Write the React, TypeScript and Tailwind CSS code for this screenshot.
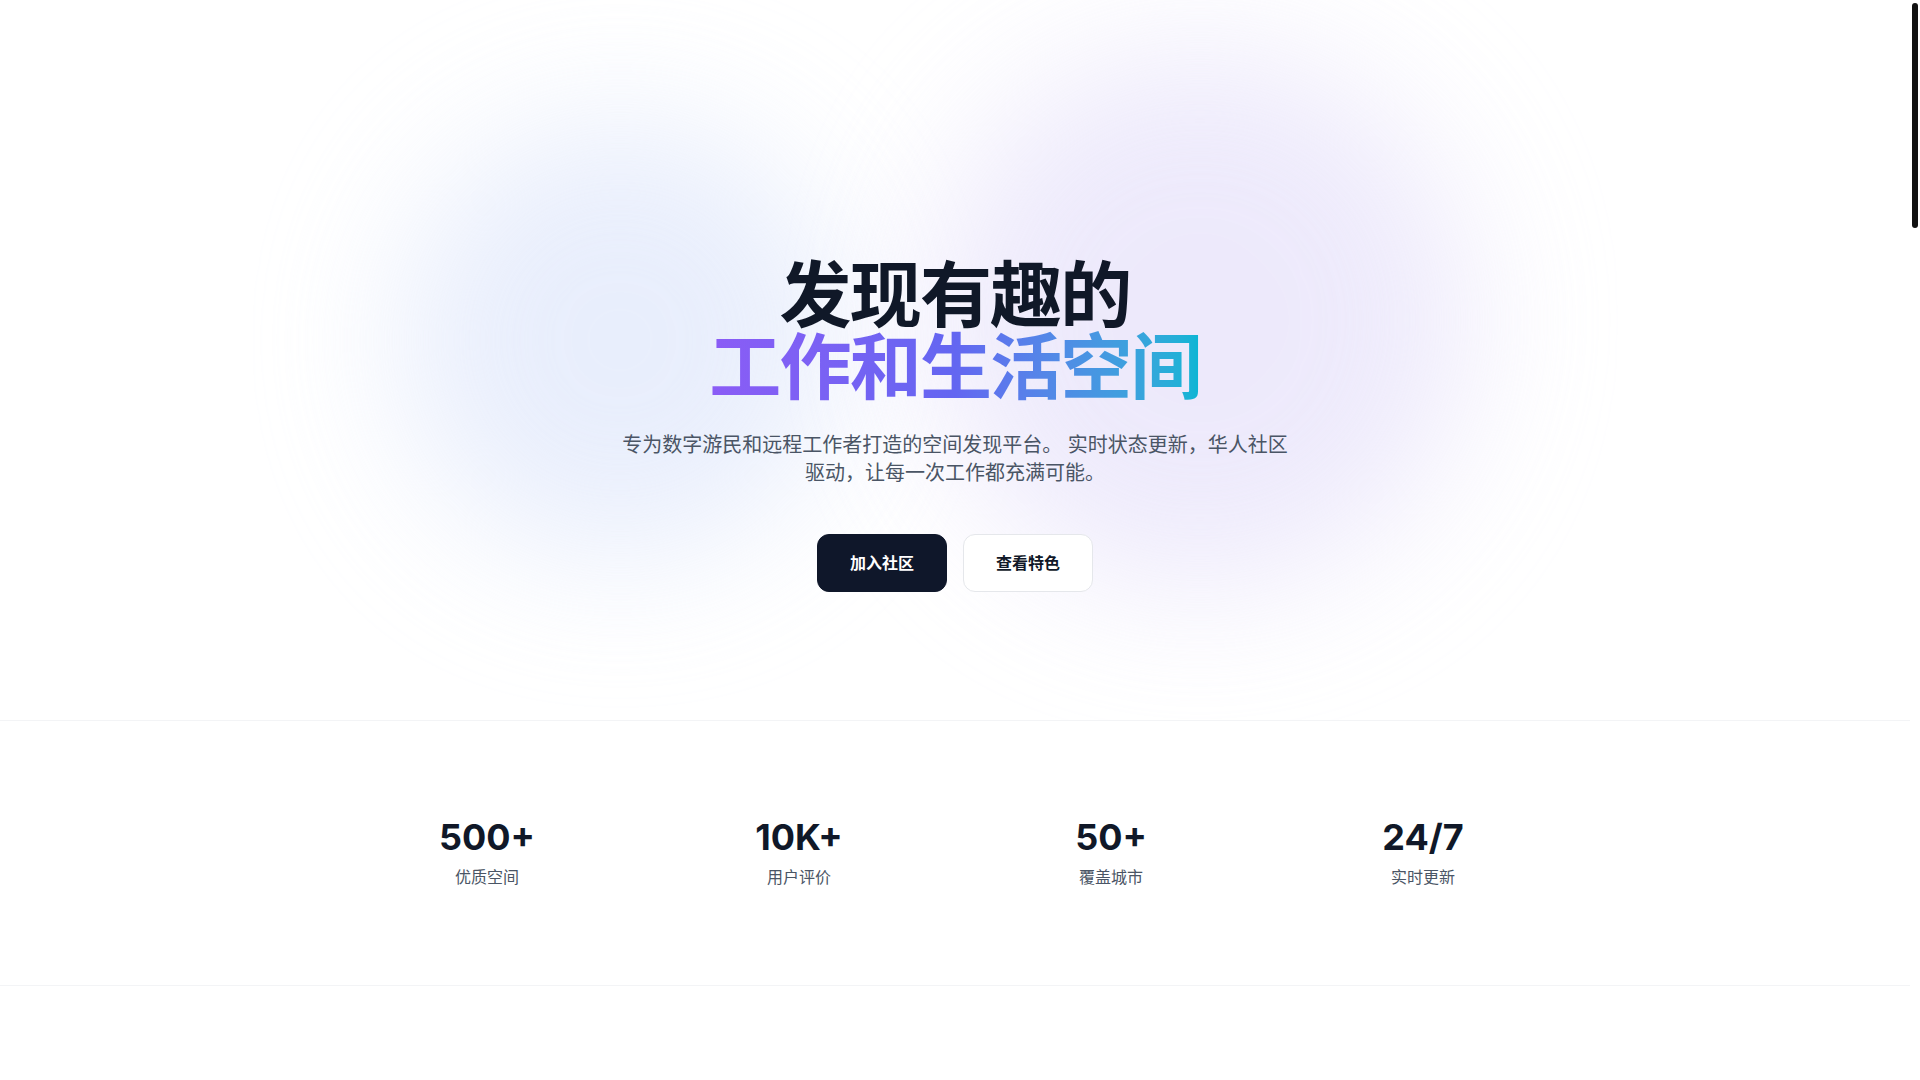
import React from "react";

const stats = [
  { value: "500+", label: "优质空间" },
  { value: "10K+", label: "用户评价" },
  { value: "50+", label: "覆盖城市" },
  { value: "24/7", label: "实时更新" },
];

export default function App() {
  return (
    <div
      className="flex h-screen overflow-hidden bg-white text-gray-900"
      style={{ fontFamily: "Inter, 'Noto Sans CJK SC', 'Noto Sans', sans-serif" }}
    >
      <main className="min-w-0 flex-1">
        {/* Hero */}
        <section className="relative h-[720px] overflow-hidden bg-white">
          <div className="pointer-events-none absolute left-[400px] top-[120px] h-[440px] w-[440px] rounded-full bg-[#dfe7fb] opacity-70 blur-[70px]" />
          <div className="pointer-events-none absolute left-[930px] top-[50px] h-[540px] w-[540px] rounded-full bg-[#e6e1fa] opacity-70 blur-[70px]" />
          <div className="relative flex flex-col items-center pt-[259px] text-center">
            <h1 className="text-7xl font-bold leading-none tracking-tight">
              <span className="block text-gray-900">发现有趣的</span>
              <span className="block">
                <span className="bg-gradient-to-r from-[#8b5cf6] via-[#6366f1] to-[#06b6d4] bg-clip-text text-transparent">
                  工作和生活空间
                </span>
              </span>
            </h1>
            <p className="mt-7 max-w-2xl text-xl text-gray-600">
              专为数字游民和远程工作者打造的空间发现平台。 实时状态更新，华人社区驱动，让每一次工作都充满可能。
            </p>
            <div className="mt-[47px] flex gap-4">
              <button className="rounded-xl border border-[#0f172a] bg-[#0f172a] px-8 py-4 text-base font-semibold text-white">
                加入社区
              </button>
              <button className="rounded-xl border border-gray-200 bg-white px-8 py-4 text-base font-semibold text-gray-900">
                查看特色
              </button>
            </div>
          </div>
        </section>

        {/* Stats */}
        <section className="border-y border-gray-100 bg-white py-24">
          <div className="mx-auto grid max-w-7xl grid-cols-4 gap-8 px-8 text-center">
            {stats.map((s) => (
              <div key={s.label} className="flex flex-col items-center">
                <div className="text-4xl font-bold text-gray-900">{s.value}</div>
                <div className="mt-2 text-base text-gray-600">{s.label}</div>
              </div>
            ))}
          </div>
        </section>
      </main>

      {/* Scrollbar rail */}
      <aside className="flex w-[10px] shrink-0 justify-center bg-white pt-[3px]">
        <div className="h-[225px] w-[6px] rounded-full bg-[#111111]" />
      </aside>
    </div>
  );
}
